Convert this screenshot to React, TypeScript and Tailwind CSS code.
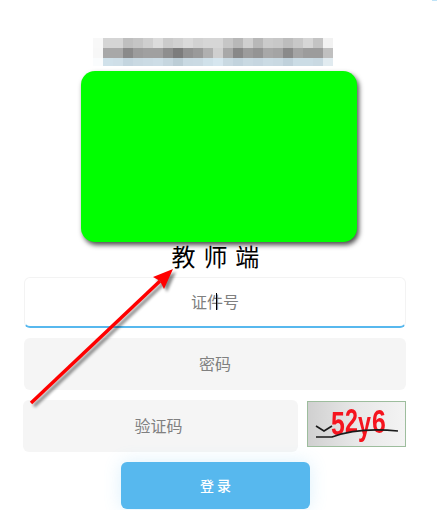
import React from "react";

const font = { fontFamily: '"Noto Sans CJK SC", "Liberation Sans", sans-serif' };

// mosaic over the blurred school name
const mosaic = [
  ["#f8f8f8", "#d5d5d5", "#d5d5d5", "#bfbfbf", "#c5c5c5", "#cfcfcf", "#dcdcdc", "#cbcbcb", "#d1d1d1", "#dadada", "#d2d2d2", "#d6d6d6", "#d6d6d6", "#c6c6c6", "#b8b8b8", "#cfcfcf", "#b8b8b8", "#cbcbcb", "#c8c8c8", "#bdbdbd", "#c8c8c8", "#d6d6d6", "#c4c4c4", "#f2f2f2"],
  ["#f7f7f7", "#a8a8a8", "#a8a8a8", "#8a8a8a", "#9c9c9c", "#a0a0a0", "#a0a0a0", "#8e8e8e", "#7c7c7c", "#929292", "#9a9a9a", "#b0b0b0", "#cfcfcf", "#a8a8a8", "#888888", "#9c9c9c", "#949494", "#a8a8a8", "#a4a4a4", "#8a8a8a", "#a4a4a4", "#9c9c9c", "#9c9c9c", "#c0c0c0"],
  ["#fafcfd", "#d0e1ea", "#cfdfe8", "#c4d5df", "#c9d9e2", "#cbdbe4", "#cddde6", "#c6d6df", "#bccdd6", "#c9d9e2", "#cadae3", "#d0e1ea", "#d6e6ef", "#c9d9e2", "#c2d3dd", "#c9d9e2", "#c6d6e0", "#cbdbe4", "#c9d9e2", "#c0d1db", "#cbdce5", "#cbdce5", "#c9d9e2", "#e1ebf0"],
];

const Field = ({ placeholder, active, shift }: { placeholder: string; active?: boolean; shift?: boolean }) => (
  <input
    placeholder={placeholder}
    readOnly
    className={
      active
        ? "w-full h-[51px] pb-[2px] rounded-md bg-white border border-[#f3f3f3] border-b-2 border-b-[#57b8ee] text-center text-[16px] outline-none placeholder:text-[#808080]"
        : shift
          ? "w-full h-[52px] pb-[3px] pr-[4px] rounded-md bg-[#f5f5f5] text-center text-[16px] outline-none placeholder:text-[#808080]"
          : "w-full h-[52px] pb-[3px] rounded-md bg-[#f5f5f5] text-center text-[16px] outline-none placeholder:text-[#808080]"
    }
    style={font}
  />
);

const Captcha = () => (
  <div className="relative w-[99px] h-[46px] border border-[#9dbd9d] overflow-hidden bg-gradient-to-r from-[#d0d0d0] via-[#e8e8e8] to-[#f3f3f3]">
    <div
      className="absolute left-[23px] top-[3px] flex text-[31px] leading-[34px] font-bold text-[#f5141e]"
      style={{ fontFamily: '"Liberation Sans", sans-serif' }}
    >
      <span className="origin-top-left scale-x-[0.8] scale-y-[1.05] w-[14px] mt-[2px]">5</span>
      <span className="origin-top-left scale-x-[0.75] scale-y-[1.05] w-[13px] mt-[-1px]">2</span>
      <span className="origin-top-left scale-x-[0.75] scale-y-[1.05] w-[14px] mt-[2px]">y</span>
      <span className="origin-top-left scale-x-[0.8] scale-y-[1.05] w-[14px]">6</span>
    </div>
    <svg className="absolute inset-0" width="99" height="46" fill="none" stroke="#1a1a1a">
      <path d="M8 24 L16 29 L24 24" strokeWidth="1.6" />
      <path d="M8 35 L24 35 C40 29 60 26 90 29" strokeWidth="1.6" />
    </svg>
  </div>
);

export default function App() {
  return (
    <div className="relative w-[437px] h-[510px] overflow-hidden bg-white" style={font}>
      <div className="absolute right-0 top-0 w-[5px] h-px bg-[#bfe3f7]" />
      <div className="flex flex-col items-center pt-[38px]">
        <div className="flex flex-col h-[28px] w-[240px] ml-[-11px] shrink-0">
          {mosaic.map((row, r) => (
            <div key={r} className={r === 2 ? "flex h-[8px]" : "flex h-[10px]"}>
              {row.map((c, i) => (
                <div key={i} className="w-[10px]" style={{ background: c }} />
              ))}
            </div>
          ))}
        </div>
        <div className="mt-[5px] w-[276px] h-[171px] ml-[1px] rounded-[14px] bg-[#00ff00] shadow-[2px_3px_5px_rgba(0,0,0,0.7)]" />
        <div className="h-[35px] ml-[-5px] text-[24px] leading-[28px] text-black tracking-[1.2px] whitespace-pre">教 师 端</div>
      </div>

      <div className="flex flex-col pl-[24px] pr-[31px]">
        <Field placeholder="证件号" active />
        <div className="mt-[10px]">
          <Field placeholder="密码" />
        </div>
        <div className="mt-[10px] flex items-start">
          <div className="w-[275px] ml-[-1px]">
            <Field placeholder="验证码" shift />
          </div>
          <div className="ml-[9px] mt-[1px]">
            <Captcha />
          </div>
        </div>
        <div className="mt-[10px] flex justify-center">
          <button className="w-[189px] h-[47px] pl-[4px] rounded-md bg-[#57b8ee] text-white text-[14px] font-medium tracking-[3px] shadow-[0_0_18px_rgba(87,184,238,0.2)]">
            登录
          </button>
        </div>
      </div>

      {/* annotation arrow */}
      <svg className="absolute inset-0 pointer-events-none" width="437" height="510" fill="none">
        <g transform="translate(3 3)" opacity="0.45" style={{ filter: "blur(1.5px)" }}>
          <path d="M31 403 L160 281" stroke="#000" strokeWidth="3.5" />
          <path d="M173 269 L153 277 L160 281 L164 289 Z" fill="#000" />
        </g>
        <path d="M31 403 L160 281" stroke="#ff0000" strokeWidth="3.5" />
        <path d="M173 269 L153 277 L160 281 L164 289 Z" fill="#ff0000" />
      </svg>

      {/* text cursor */}
      <div className="absolute left-[216px] top-[293px] w-px h-[17px] bg-black" />
    </div>
  );
}
